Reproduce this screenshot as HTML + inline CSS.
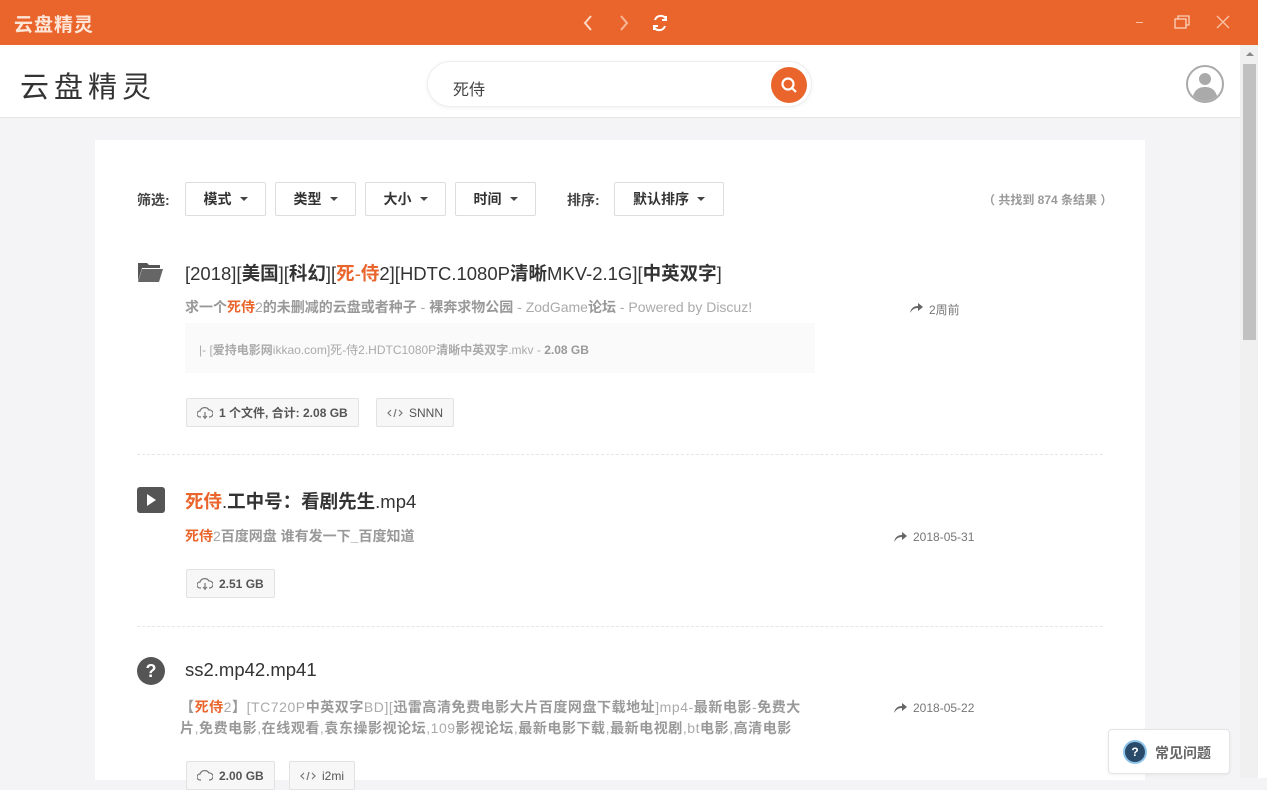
<!DOCTYPE html>
<html><head><meta charset="utf-8"><style>
*{margin:0;padding:0;box-sizing:border-box}
body{width:1267px;height:778px;overflow:hidden;background:#f4f4f6;font-family:"Liberation Sans","Noto Sans CJK SC",sans-serif;position:relative;color:#333}
.a{position:absolute}
.top{left:0;top:0;width:1259px;height:45px;background:#ea652c}
.hdr{left:0;top:45px;width:1240px;height:73px;background:#fff;border-bottom:1px solid #e6e6e6}
.card{left:95px;top:140px;width:1050px;height:640px;background:#fff}
.btn{top:182px;height:34px;border:1px solid #ddd;border-radius:2px;font-size:14px;color:#333;display:flex;align-items:center;justify-content:center;font-weight:bold}
.btn i{display:inline-block;width:0;height:0;border-left:4px solid transparent;border-right:4px solid transparent;border-top:4px solid #444;margin-left:8px}
.lbl{font-size:14px;color:#444;font-weight:bold}
.t{font-size:18.5px;color:#333}
.o{color:#ea652c}
.d{font-size:14px;color:#aaa}
.d b{color:#999}
.d b.o{color:#ea652c}
.tag{height:29px;border:1px solid #e2e2e2;background:#f7f7f7;border-radius:2px;font-size:12px;color:#555;display:flex;align-items:center;padding:0 10px;font-weight:bold}
.tag svg{margin-right:6px}
.time{font-size:12px;color:#777}
.hr{left:137px;width:966px;height:0;border-top:1px dashed #e6e6e6}
</style></head><body>
<div class="a top"></div>
<div class="a" style="left:14px;top:10px;font-size:19px;color:#fde6d8;font-weight:bold;letter-spacing:1px">云盘精灵</div>
<svg class="a" style="left:580px;top:14px" width="95" height="18" viewBox="0 0 95 18" fill="none" stroke="#fbd9c6" stroke-width="2"><path d="M11 2L5 9l6 7"/><path d="M41 2l6 7-6 7" opacity=".7"/><path d="M86 5a6 6 0 0 0-11 1M74 13a6 6 0 0 0 11-1" stroke="#fff"/><path d="M86 2v4h-4M74 16v-4h4" stroke="#fff"/></svg>
<div class="a" style="left:1136px;top:22px;width:7px;height:1px;background:#f7c4a8"></div>
<svg class="a" style="left:1174px;top:14px" width="18" height="16" fill="none" stroke="#fbd2bc" stroke-width="1.3"><rect x="1" y="5" width="11" height="9"/><path d="M4 5V2h11v9h-3"/></svg>
<svg class="a" style="left:1216px;top:15px" width="14" height="14" stroke="#f7c4a8" stroke-width="1.3"><path d="M1 1l12 12M13 1L1 13"/></svg>
<div class="a hdr"></div>
<div class="a" style="left:20px;top:64px;font-size:29px;color:#333;letter-spacing:5px">云盘精灵</div>
<div class="a" style="left:427px;top:61px;width:385px;height:46px;border:1px solid #eee;border-radius:23px;box-shadow:0 1px 4px rgba(0,0,0,.06);background:#fff"></div>
<div class="a" style="left:453px;top:76px;font-size:16px;color:#444">死侍</div>
<div class="a" style="left:771px;top:67px;width:36px;height:36px;border-radius:50%;background:#ea652c"></div>
<svg class="a" style="left:779px;top:75px" width="20" height="20" fill="none" stroke="#fff" stroke-width="2.2"><circle cx="9" cy="9" r="5.5"/><path d="M13 13l4 4"/></svg>
<svg class="a" style="left:1185px;top:64px" width="40" height="40"><circle cx="20" cy="20" r="18" fill="#fff" stroke="#aaa" stroke-width="2"/><circle cx="20" cy="15" r="6" fill="#aaa"/><path d="M8 32c2-7 7-9 12-9s10 2 12 9a17 17 0 0 1-24 0z" fill="#aaa"/></svg>
<div class="a" style="left:1240px;top:45px;width:18px;height:733px;background:#f0f0f0"></div>
<div class="a" style="left:1243px;top:64px;width:13px;height:276px;background:#c1c1c1"></div>
<div class="a" style="left:1246px;top:52px;width:0;height:0;border-left:4px solid transparent;border-right:4px solid transparent;border-bottom:4px solid #888"></div>
<div class="a" style="left:1258px;top:0;width:9px;height:778px;background:#fff"></div>
<div class="a card"></div>
<div class="a lbl" style="left:137px;top:190px">筛选:</div>
<div class="a btn" style="left:185px;width:81px">模式<i></i></div>
<div class="a btn" style="left:275px;width:81px">类型<i></i></div>
<div class="a btn" style="left:365px;width:81px">大小<i></i></div>
<div class="a btn" style="left:455px;width:81px">时间<i></i></div>
<div class="a lbl" style="left:567px;top:190px">排序:</div>
<div class="a btn" style="left:614px;width:110px">默认排序<i></i></div>
<div class="a" style="left:983px;top:191px;font-size:12px;color:#999;font-weight:bold">（ 共找到 874 条结果 ）</div>

<svg class="a" style="left:138px;top:261px" width="25" height="21"><path d="M0 2h9l2 2h11v3H4L0 20z" fill="#555"/><path d="M4 8h21l-4 13H0z" fill="#666"/></svg>
<div class="a t" style="left:185px;top:260px">[2018][<b>美国</b>][<b>科幻</b>][<span class="o"><b>死</b>-<b>侍</b></span>2][HDTC.1080P<b>清晰</b>MKV-2.1G][<b>中英双字</b>]</div>
<div class="a d" style="left:185px;top:297px"><b>求一个</b><b class="o">死侍</b>2<b>的未删减的云盘或者种子</b> - <b>裸奔求物公园</b> - ZodGame<b>论坛</b> - Powered by Discuz!</div>
<svg class="a" style="left:910px;top:302px" width="13" height="11"><path d="M0 11C1 6 4 4 8 4V1l5 4-5 4V6C4 6 2 8 0 11z" fill="#666"/></svg>
<div class="a time" style="left:929px;top:301px">2周前</div>
<div class="a" style="left:185px;top:323px;width:630px;height:50px;background:#fafafb"></div>
<div class="a" style="left:199px;top:341px;font-size:12px;color:#aaa">|- [<b>爱持电影网</b>ikkao.com]死-侍2.HDTC1080P<b>清晰中英双字</b>.mkv - <b style="color:#999">2.08 GB</b></div>
<div class="a tag" style="left:186px;top:398px"><svg width="16" height="14" fill="none" stroke="#777" stroke-width="1.2"><path d="M4 11H3a3 3 0 0 1 0-6 5 5 0 0 1 9-1 3.5 3.5 0 0 1 1 7h-1M8 6v7M6 10l2 2 2-2"/></svg>1 个文件, 合计: 2.08 GB</div>
<div class="a tag" style="left:376px;top:398px;font-weight:normal"><svg width="16" height="12" fill="none" stroke="#777" stroke-width="1.2"><path d="M4 3L1 6l3 3M12 3l3 3-3 3M9 2L7 10"/></svg>SNNN</div>
<div class="a hr" style="top:454px"></div>

<div class="a" style="left:137px;top:487px;width:28px;height:26px;border-radius:3px;background:#555"></div>
<div class="a" style="left:147px;top:494px;width:0;height:0;border-top:6px solid transparent;border-bottom:6px solid transparent;border-left:9px solid #fff"></div>
<div class="a t" style="left:185px;top:488px"><b class="o">死侍</b>.<b>工中号：看剧先生</b>.mp4</div>
<div class="a d" style="left:185px;top:526px"><b class="o">死侍</b>2<b>百度网盘 谁有发一下_百度知道</b></div>
<svg class="a" style="left:894px;top:531px" width="13" height="11"><path d="M0 11C1 6 4 4 8 4V1l5 4-5 4V6C4 6 2 8 0 11z" fill="#666"/></svg>
<div class="a time" style="left:913px;top:530px">2018-05-31</div>
<div class="a tag" style="left:186px;top:569px"><svg width="16" height="14" fill="none" stroke="#777" stroke-width="1.2"><path d="M4 11H3a3 3 0 0 1 0-6 5 5 0 0 1 9-1 3.5 3.5 0 0 1 1 7h-1M8 6v7M6 10l2 2 2-2"/></svg>2.51 GB</div>
<div class="a hr" style="top:626px"></div>

<div class="a" style="left:137px;top:657px;width:28px;height:28px;border-radius:50%;background:#555;color:#fff;font-weight:bold;font-size:18px;text-align:center;line-height:28px">?</div>
<div class="a t" style="left:185px;top:659px">ss2.mp42.mp41</div>
<div class="a d" style="left:180px;top:697px;line-height:21px;width:700px;white-space:nowrap;letter-spacing:0.55px"><b>【</b><b class="o">死侍</b>2<b>】</b>[TC720P<b>中英双字</b>BD][<b>迅雷高清免费电影大片百度网盘下载地址</b>]mp4-<b>最新电影</b>-<b>免费大</b><br><b>片</b>,<b>免费电影</b>,<b>在线观看</b>,<b>袁东操影视论坛</b>,109<b>影视论坛</b>,<b>最新电影下载</b>,<b>最新电视剧</b>,bt<b>电影</b>,<b>高清电影</b></div>
<svg class="a" style="left:894px;top:702px" width="13" height="11"><path d="M0 11C1 6 4 4 8 4V1l5 4-5 4V6C4 6 2 8 0 11z" fill="#666"/></svg>
<div class="a time" style="left:913px;top:701px">2018-05-22</div>
<div class="a tag" style="left:186px;top:761px"><svg width="16" height="14" fill="none" stroke="#777" stroke-width="1.2"><path d="M4 11H3a3 3 0 0 1 0-6 5 5 0 0 1 9-1 3.5 3.5 0 0 1 1 7h-1"/></svg>2.00 GB</div>
<div class="a tag" style="left:289px;top:761px;font-weight:normal"><svg width="16" height="12" fill="none" stroke="#777" stroke-width="1.2"><path d="M4 3L1 6l3 3M12 3l3 3-3 3M9 2L7 10"/></svg>i2mi</div>

<div class="a" style="left:1108px;top:729px;width:122px;height:45px;background:#fff;border:1px solid #e4e4e4;border-radius:4px;box-shadow:0 1px 3px rgba(0,0,0,.06)"></div>
<div class="a" style="left:1125px;top:742px;width:20px;height:20px;border-radius:50%;background:#2a4a6a;box-shadow:0 0 0 2px #8ec3ea;color:#fff;font-size:12px;font-weight:bold;text-align:center;line-height:20px">?</div>
<div class="a" style="left:1155px;top:743px;font-size:14px;color:#666;font-weight:bold">常见问题</div>
</body></html>
